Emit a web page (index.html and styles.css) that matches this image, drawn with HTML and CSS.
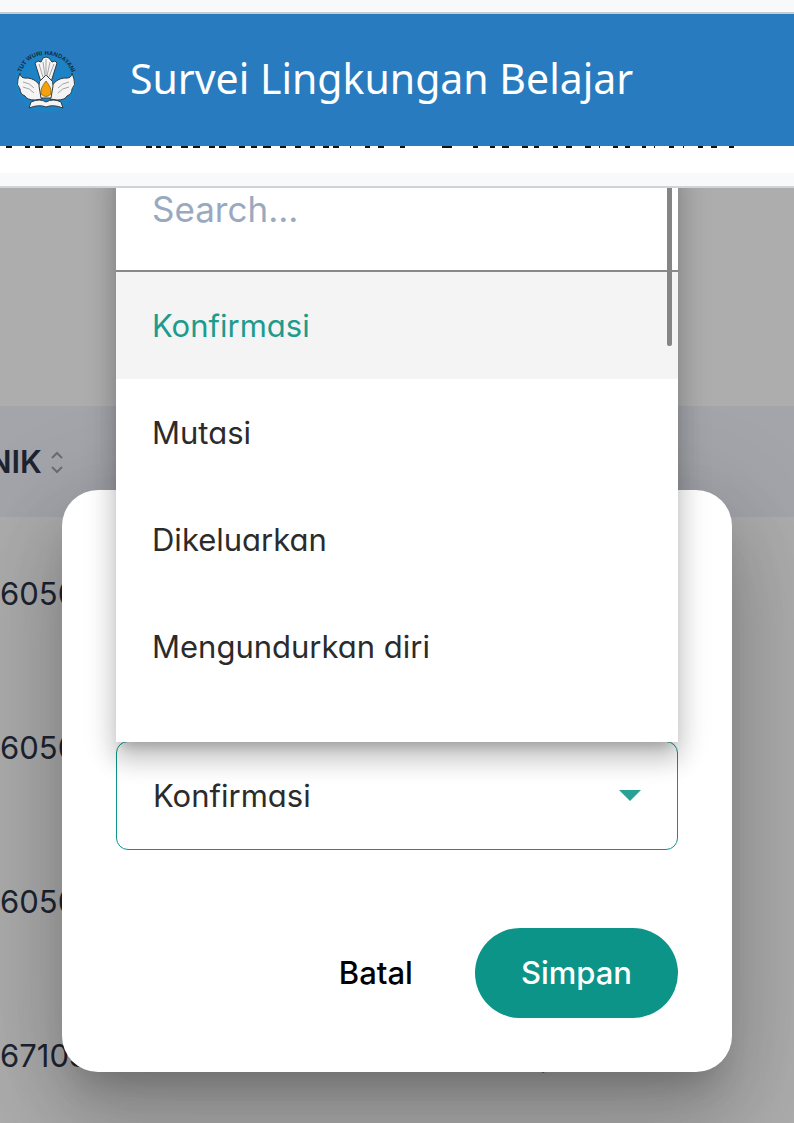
FILE: index.html
```html
<!DOCTYPE html>
<html lang="id">
<head>
<meta charset="utf-8">
<meta name="viewport" content="width=device-width, initial-scale=1">
<title>Survei Lingkungan Belajar</title>
<link rel="stylesheet" href="styles.css">
</head>
<body>
<div class="page">
  <div class="strip"></div>
  <header class="banner">
    <svg class="logo" viewBox="0 0 64 64" role="img" aria-label="Tut Wuri Handayani">
      <defs><path id="arc" d="M6 27 Q13 7 32 7 Q51 7 59 27"/></defs>
      <circle cx="32" cy="34" r="31" fill="#1d82c6"/>
      <text class="motto"><textPath href="#arc" startOffset="50%" text-anchor="middle">TUT WURI HANDAYANI</textPath></text>
      <g fill="#f4f4f4" stroke="#313b42" stroke-width="1" stroke-linejoin="round">
        <path d="M27 34 L21 15 L24 13 L27 14 L29 10 L32 9 L35 10 L38 14 L41 13 L43 15 L37 34Z"/>
        <path d="M6 25 Q6 31 14 30 Q22 31 26 38 L28 51 L21 52 Q13 52 11 48 Q6 46 6 41 Q2 37 4 31Z"/>
        <path d="M58 25 Q58 31 50 30 Q42 31 38 38 L36 51 L43 52 Q51 52 53 48 Q58 46 58 41 Q62 37 60 31Z"/>
        <path d="M25 38 Q24 33 29 30 L32 27 L35 30 Q40 33 39 38 L37 50 H27Z"/>
        <path d="M17 54 Q26 50 32 54 Q39 50 47 54 L49 60 Q39 56 32 59 Q25 56 15 60Z"/>
      </g>
      <path d="M25 16 L29 29 M29 14 L31 28 M32 11 V27 M36 14 L33 28 M40 16 L35 29 M9 34 Q16 35 20 40 M9 39 Q16 40 20 45 M55 34 Q48 35 44 40 M55 39 Q48 40 44 45" fill="none" stroke="#a5a5a5" stroke-width="1"/>
      <path d="M32 33 Q38 40 37 46 Q32 51 27 46 Q26 40 32 33Z" fill="#f4a20c" stroke="#79500b" stroke-width=".7"/>
    </svg>
    <h1 class="title">Survei Lingkungan Belajar</h1>
  </header>
  <div class="cutline">
    <svg class="marks" width="794" height="3" viewBox="0 0 794 3" aria-hidden="true">
      <path d="M6 1h6m13 0h5m5 0h8m12 0h6m9 0h1m14 0h5m8 0h7m11 0h6m24 0h6m4 0h5m5 0h6m9 0h7m5 0h7m9 0h6m4 0h7m13 0h6m6 0h6m6 0h8m9 0h6m9 0h6m9 0h5m8 0h6m4 0h6m11 0h1m14 0h5m8 0h6m16 0h5m37 0h10m21 0h5m12 0h5m7 0h7m13 0h6m6 0h5m14 0h5m8 0h6m13 0h6m8 0h1m13 0h5m7 0h5m12 0h4m8 0h1m14 0h5m9 0h1m14 0h5m8 0h6m12 0h5" stroke="#111" stroke-width="2"/>
    </svg>
  </div>
  <div class="strip strip-lower"></div>

  <main class="stage">
    <table class="records">
      <thead>
        <tr><th class="nik" scope="col"><span class="sort">NIK
          <svg width="14" height="24" viewBox="0 0 14 24" aria-hidden="true"><path d="M2 8 L7 3 L12 8 M2 17 L7 22 L12 17" fill="none" stroke="#6b6d72" stroke-width="2"/></svg></span></th><td></td></tr>
      </thead>
      <tbody>
        <tr><td>6050</td><td></td></tr>
        <tr><td>6050</td><td></td></tr>
        <tr><td>6050</td><td></td></tr>
        <tr><td>67103</td><td>,</td></tr>
      </tbody>
    </table>

    <form class="dialog" role="dialog" aria-label="Konfirmasi">
      <div class="field">
        <button class="picker" type="button" aria-haspopup="listbox" aria-expanded="true">
          Konfirmasi
          <svg width="22" height="11" viewBox="0 0 22 11" aria-hidden="true"><path d="M0 0H22L11 11Z" fill="#2aa196"/></svg>
        </button>
        <div class="menu">
          <input class="search" type="text" placeholder="Search..." aria-label="Search">
          <div class="options" role="listbox" aria-label="Status">
            <button class="option selected" type="button" role="option" aria-selected="true">Konfirmasi</button>
            <button class="option" type="button" role="option" aria-selected="false">Mutasi</button>
            <button class="option" type="button" role="option" aria-selected="false">Dikeluarkan</button>
            <button class="option" type="button" role="option" aria-selected="false">Mengundurkan diri</button>
          </div>
          <span class="thumb"></span>
        </div>
      </div>
      <div class="actions">
        <button class="cancel" type="button">Batal</button>
        <button class="save" type="submit">Simpan</button>
      </div>
    </form>
  </main>
</div>
</body>
</html>
```
FILE: styles.css
```css
* { box-sizing: border-box; }

body {
  margin: 0;
  background: #fff;
  color: #2b2b2b;
  font: 31px/36px Inter, "Liberation Sans", sans-serif;
}

button, input { font: inherit; color: inherit; }
button { border: 0; background: none; cursor: pointer; }

.page {
  min-height: 100vh;
  display: flex;
  flex-direction: column;
}

.strip {
  height: 14px;
  background: #f8f9fb;
  border-bottom: 2px solid #c9cbcd;
}
.strip-lower { height: 15px; border-color: #d2d3d4; }

.banner {
  display: flex;
  align-items: center;
  gap: 52px;
  padding: 34px 14px;
  background: #287bbf;
}
.logo { width: 64px; height: 64px; flex: none; }
.motto { font: bold 6px "Liberation Sans", sans-serif; fill: #14293a; }
.title {
  margin: 0;
  padding-bottom: 4px;
  color: #fff;
  font: 400 41px/60px "Noto Sans", sans-serif;
}

.cutline { height: 27px; overflow: hidden; }
.marks { display: block; }

.stage {
  flex: 1;
  display: grid;
  align-items: start;
  overflow: hidden;
  background: #adadad;
}
.records, .dialog { grid-area: 1 / 1; }

.records {
  width: 100%;
  margin-top: 218px;
  border-collapse: collapse;
  table-layout: fixed;
  color: #1c2431;
}
.records thead { background: #a3a5aa; }
.records th {
  height: 111px;
  padding: 0;
  text-align: left;
  font-weight: 600;
}
.nik { width: 68%; }
.sort {
  display: flex;
  align-items: center;
  gap: 8px;
  margin-left: -12px;
}
.records td { padding: 0; }
.records tbody td { height: 154px; }

.dialog {
  position: relative;
  justify-self: center;
  width: calc(100% - 124px);
  max-width: 670px;
  margin-top: 302px;
  padding: 251px 54px 54px;
  border-radius: 36px;
  background: #fff;
  box-shadow:
    0 25px 34px -16px rgba(0, 0, 0, .2),
    0 54px 85px 7px rgba(0, 0, 0, .14),
    0 20px 103px 18px rgba(0, 0, 0, .12);
}

.field { position: relative; }
.picker {
  display: flex;
  align-items: center;
  justify-content: space-between;
  width: 100%;
  height: 109px;
  padding: 0 36px;
  border: 1px solid #0d9488;
  border-radius: 12px;
}

.menu {
  position: absolute;
  right: 0;
  bottom: calc(100% - 1px);
  left: 0;
  padding-bottom: 42px;
  background: #fff;
  box-shadow:
    0 11px 11px -7px rgba(0, 0, 0, .2),
    0 18px 22px 2px rgba(0, 0, 0, .14),
    0 7px 31px 4px rgba(0, 0, 0, .12);
}
.search {
  display: block;
  width: 100%;
  height: 108px;
  padding: 0 36px 16px;
  border: 0;
  border-bottom: 2px solid #888a88;
  background: none;
  font-size: 35px;
  outline: 0;
}
.search::placeholder { color: #9aa9bf; opacity: 1; }
.option {
  display: block;
  width: 100%;
  height: 107px;
  padding: 0 36px;
  text-align: left;
}
.picker, .option { font-feature-settings: "cv11"; }
.selected { background: #f4f4f4; color: #1d9b8d; }
.thumb {
  position: absolute;
  top: 0;
  right: 6px;
  width: 5px;
  height: 182px;
  border-radius: 2px;
  background: #858585;
}

.actions {
  display: flex;
  justify-content: flex-end;
  gap: 16px;
  margin-top: 78px;
}
.actions button {
  height: 90px;
  padding: 0 46px;
  border-radius: 45px;
  font-weight: 500;
}
.cancel { color: #000; }
.actions .save { background: #0d9488; color: #fff; }
```
